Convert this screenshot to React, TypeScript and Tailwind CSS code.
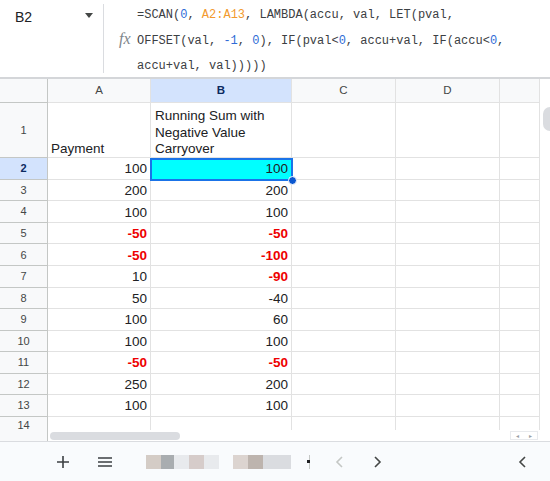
import React from 'react';

type Row = { n: number; a: string; b: string; aNeg?: boolean; bNeg?: boolean };

const rows: Row[] = [
  { n: 2, a: '100', b: '100' },
  { n: 3, a: '200', b: '200' },
  { n: 4, a: '100', b: '100' },
  { n: 5, a: '-50', b: '-50', aNeg: true, bNeg: true },
  { n: 6, a: '-50', b: '-100', aNeg: true, bNeg: true },
  { n: 7, a: '10', b: '-90', bNeg: true },
  { n: 8, a: '50', b: '-40' },
  { n: 9, a: '100', b: '60' },
  { n: 10, a: '100', b: '100' },
  { n: 11, a: '-50', b: '-50', aNeg: true, bNeg: true },
  { n: 12, a: '250', b: '200' },
  { n: 13, a: '100', b: '100' },
  { n: 14, a: '', b: '' },
];

const cellLine = 'border-r border-b border-[#e2e2e2]';
const num = 'flex items-center justify-end pr-[3px] pt-[2px]';

const Val: React.FC<{ v: string; neg?: boolean }> = ({ v, neg }) => (
  <span className={neg ? 'font-bold text-[#ee0000]' : 'text-[#202124]'}>{v}</span>
);

const App: React.FC = () => {
  return (
    <div className="w-[550px] h-[481px] overflow-hidden bg-white flex flex-col font-['Liberation_Sans',Arial,sans-serif]">
      {/* Formula bar */}
      <div className="h-[77px] flex shrink-0">
        <div className="w-[104px] flex items-start pt-[5px] pl-[15px] pr-[10px] justify-between border-r border-[#dadce0] my-[4px]">
          <span className="text-[14px] text-[#202124] leading-[16px]">B2</span>
          <svg width="8" height="5" viewBox="0 0 8 5" className="mt-[4px]">
            <path d="M0 0 L8 0 L4 5 Z" fill="#444746" />
          </svg>
        </div>
        <div className="flex-1 flex pl-[15px]">
          <div className="w-[18px] pt-[31px] font-['Liberation_Serif',serif] italic text-[16px] text-[#80868b] leading-[16px]">
            fx
          </div>
          <div className="font-['Liberation_Mono',monospace] text-[12px] text-[#3c4043] leading-[25.5px] pt-[3px] whitespace-pre">
            <div>
              =SCAN(<span className="text-[#2f6cd6]">0</span>, <span className="text-[#f29a2e]">A2:A13</span>, LAMBDA(accu, val, LET(pval,
            </div>
            <div>
              OFFSET(val, <span className="text-[#2f6cd6]">-1</span>, <span className="text-[#2f6cd6]">0</span>), IF(pval&lt;<span className="text-[#2f6cd6]">0</span>, accu+val, IF(accu&lt;<span className="text-[#2f6cd6]">0</span>,
            </div>
            <div>accu+val, val)))))</div>
          </div>
        </div>
      </div>
      <div className="h-[2px] bg-[#d4d6d9] shrink-0" />

      {/* Grid */}
      <div className="relative h-[351px] shrink-0 flex overflow-hidden">
        <div className="flex flex-col">
          {/* header row */}
          <div className="h-[24px] flex text-[11.5px] text-[#444746] shrink-0">
            <div className="w-[48px] bg-[#f8f9fa] border-r border-b border-[#c4c7c5]" />
            <div className="w-[103px] bg-[#f8f9fa] border-r border-b border-[#e2e2e2] flex items-center justify-center">A</div>
            <div className="w-[141px] bg-[#d3e3fd] border-r border-b border-[#e2e2e2] flex items-center justify-center font-bold text-[#0b2a60]">B</div>
            <div className="w-[104px] bg-[#f8f9fa] border-r border-b border-[#e2e2e2] flex items-center justify-center">C</div>
            <div className="w-[104px] bg-[#f8f9fa] border-r border-b border-[#e2e2e2] flex items-center justify-center">D</div>
            <div className="w-[40px] bg-[#f8f9fa] border-r border-b border-[#e2e2e2]" />
          </div>

          {/* row 1 */}
          <div className="h-[55.3px] flex text-[13.5px] text-[#202124] shrink-0">
            <div className="w-[48px] bg-[#f8f9fa] border-r border-b border-[#c4c7c5] flex items-center justify-center text-[11px] text-[#444746]">1</div>
            <div className={`w-[103px] ${cellLine} flex items-end pl-[3px] pb-0 leading-[16.3px]`}>Payment</div>
            <div className={`w-[141px] ${cellLine} flex items-end pl-[4px] pb-0 leading-[16.3px]`}>
              <span>
                Running Sum with
                <br />
                Negative Value
                <br />
                Carryover
              </span>
            </div>
            <div className={`w-[104px] ${cellLine}`} />
            <div className={`w-[104px] ${cellLine}`} />
            <div className={`w-[40px] ${cellLine}`} />
          </div>

          {rows.map((r) => (
            <div key={r.n} className="h-[21.55px] flex text-[13.5px] shrink-0">
              <div
                className={`w-[48px] border-r border-b border-[#c4c7c5] flex justify-center text-[11px] ${
                  r.n === 14 ? 'items-start pt-[2px] leading-[12px]' : 'items-center'
                } ${r.n === 2 ? 'bg-[#d3e3fd] font-bold text-[#0b2a60]' : 'bg-[#f8f9fa] text-[#444746]'}`}
              >
                {r.n}
              </div>
              <div className={`w-[103px] ${cellLine} ${num}`}>
                <Val v={r.a} neg={r.aNeg} />
              </div>
              <div className={`w-[141px] ${cellLine} ${num} ${r.n === 2 ? 'bg-[#00ffff]' : ''}`}>
                <Val v={r.b} neg={r.bNeg} />
              </div>
              <div className={`w-[104px] ${cellLine}`} />
              <div className={`w-[104px] ${cellLine}`} />
              <div className={`w-[40px] ${cellLine}`} />
            </div>
          ))}
        </div>

        {/* vertical scrollbar */}
        <div className="w-[10px] bg-white relative">
          <div className="absolute left-[3px] top-[28px] w-[7px] h-[24px] rounded-l-full bg-[#dadce0]" />
        </div>

        {/* selection overlay on B2 */}
        <div className="absolute left-[150px] top-[78.5px] w-[143px] h-[23px] border-2 border-[#1a73e8]" />
        <div className="absolute left-[288px] top-[97px] w-[9px] h-[9px] rounded-full bg-[#0b57d0] border border-white" />
      </div>

      {/* horizontal scrollbar */}
      <div className="h-[11px] flex items-center bg-white shrink-0 relative">
        <div className="w-[48px] h-full bg-[#f8f9fa] border-r border-[#c4c7c5]" />
        <div className="ml-[2px] w-[130px] h-[8px] rounded-full bg-[#dadce0]" />
        <div className="ml-auto mr-[12px] w-[28px] h-[9px] border border-[#e8eaed] flex items-center justify-around text-[6px] text-[#9aa0a6] leading-none">
          <span>◂</span>
          <span>▸</span>
        </div>
      </div>

      {/* bottom bar */}
      <div className="flex-1 bg-[#f9fbfd] border-t border-[#dadce0] flex items-center relative">
        <svg width="12" height="12" viewBox="0 0 12 12" className="ml-[57px]">
          <path d="M6 0 V12 M0 6 H12" stroke="#3c4043" strokeWidth="1.6" />
        </svg>
        <svg width="14" height="10" viewBox="0 0 14 10" className="ml-[29px]">
          <path d="M0 1 H14 M0 5 H14 M0 9 H14" stroke="#3c4043" strokeWidth="1.6" />
        </svg>
        <div className="ml-[34px] flex h-[14px]">
          <div className="w-[15px] bg-[#d4ccc6]" />
          <div className="w-[13px] bg-[#a9adb0]" />
          <div className="w-[15px] bg-[#e8eaed]" />
          <div className="w-[15px] bg-[#d6ccca]" />
          <div className="w-[15px] bg-[#e8eaed]" />
          <div className="w-[14px] bg-transparent" />
          <div className="w-[15px] bg-[#dcd4d0]" />
          <div className="w-[15px] bg-[#bdb4ae]" />
          <div className="w-[28px] bg-[#dadce0]" />
        </div>
        <div className="ml-[16px] w-[3px] h-[14px] flex flex-col items-center justify-center border-r border-[#c4c7c5]">
          <div className="w-[3px] h-[3px] bg-[#202124]" />
        </div>
        <svg width="8" height="12" viewBox="0 0 8 12" className="ml-[25px]">
          <path d="M7 1 L2 6 L7 11" stroke="#c4c7c5" strokeWidth="1.6" fill="none" />
        </svg>
        <svg width="8" height="12" viewBox="0 0 8 12" className="ml-[31px]">
          <path d="M1 1 L6 6 L1 11" stroke="#444746" strokeWidth="1.6" fill="none" />
        </svg>
        <svg width="8" height="12" viewBox="0 0 8 12" className="ml-auto mr-[24px]">
          <path d="M7 1 L2 6 L7 11" stroke="#444746" strokeWidth="1.6" fill="none" />
        </svg>
      </div>
    </div>
  );
};

export default App;
